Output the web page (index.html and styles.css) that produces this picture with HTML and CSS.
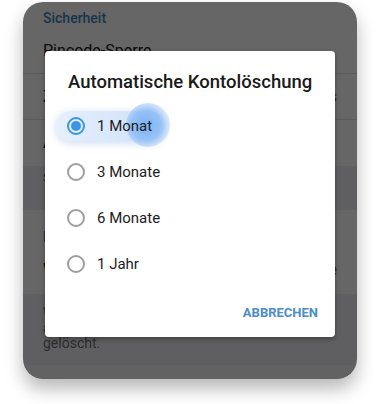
FILE: index.html
```html
<!DOCTYPE html>
<html lang="de">
<head>
<meta charset="utf-8">
<link rel="stylesheet" href="styles.css">
</head>
<body>
<div class="phone">
  <div class="screen">
    <div class="section">
      <div class="header">Sicherheit</div>
      <div class="row">Pincode-Sperre</div>
      <div class="row">Zwei-Schritt-Bestätigung <span class="val">Aus</span></div>
      <div class="row last">Aktive Sitzungen</div>
    </div>
    <div class="gap">Steuere deine Sitzungen auf anderen Geräten.</div>
    <div class="section">
      <div class="header second">Konto automatisch löschen</div>
      <div class="row last tall">Wenn abwesend seit <span class="val">6 Monate</span></div>
    </div>
    <div class="footer">Wenn du dich in diesem Zeitraum nicht einmal<br>anmeldest, wird dein Konto mit allen Chats<br>gelöscht.</div>
    <div class="bottom"></div>
  </div>
  <div class="overlay"></div>
  <div class="dialog">
    <div class="title">Automatische Kontolöschung</div>
    <div class="options">
      <div class="opt selected">
        <span class="ripple-pill"></span>
        <span class="ripple-dot"></span>
        <span class="radio"></span><span class="label">1 Monat</span>
      </div>
      <div class="opt"><span class="radio"></span><span class="label">3 Monate</span></div>
      <div class="opt"><span class="radio"></span><span class="label">6 Monate</span></div>
      <div class="opt"><span class="radio"></span><span class="label">1 Jahr</span></div>
    </div>
    <div class="actions"><span class="btn">ABBRECHEN</span></div>
  </div>
</div>
</body>
</html>
```

FILE: styles.css
```css
html, body {
  margin: 0;
  padding: 0;
  background: #ffffff;
  width: 381px;
  height: 404px;
  overflow: hidden;
  font-family: Roboto, "Noto Sans", "Liberation Sans", sans-serif;
}
.phone {
  position: relative;
  margin: 2px 0 0 23px;
  width: 334px;
  height: 377px;
  border-radius: 20px;
  overflow: hidden;
  box-shadow: 0 10px 18px rgba(0,0,0,0.28);
}
.screen {
  background: #ffffff;
  height: 100%;
  color: #222;
}
.section {
  background: #ffffff;
}
.header {
  color: #3e83bc;
  font-size: 14px;
  font-weight: 500;
  line-height: 18px;
  padding: 7px 20px 0;
  height: 19px;
  white-space: nowrap;
}
.header.second {
  padding-top: 18px;
  height: 18px;
}
.row {
  display: flex;
  justify-content: space-between;
  font-size: 16px;
  height: 45px;
  line-height: 45px;
  padding: 0 20px;
  border-bottom: 1px solid #e4e4e4;
  white-space: nowrap;
}
.row.last { border-bottom: none; height: 46px; line-height: 46px; }
.row.tall { height: 48px; line-height: 48px; }
.val { color: #666; }
.gap {
  background: #eeeef2;
  height: 44px;
  font-size: 13px;
  color: #6d6d72;
  padding: 4px 20px;
  box-sizing: border-box;
  white-space: nowrap;
  overflow: hidden;
}
.footer {
  background: #eeeef2;
  font-size: 14px;
  color: #6d6d72;
  padding: 12px 20px 0;
  line-height: 15px;
  height: 71px;
  box-sizing: border-box;
  white-space: nowrap;
}
.bottom {
  background: #f4f4f7;
  height: 20px;
}
.overlay {
  position: absolute;
  inset: 0;
  background: rgba(0,0,0,0.6);
}
.dialog {
  position: absolute;
  left: 22px;
  top: 49px;
  width: 290px;
  height: 286px;
  box-sizing: border-box;
  background: #ffffff;
  border-radius: 4px;
  padding: 19px 17px 0 22px;
  box-shadow: 0 2px 5px rgba(0,0,0,0.35);
}
.title {
  font-size: 18.5px;
  font-weight: 500;
  color: #1a1a1a;
  line-height: 24px;
  padding-left: 1px;
  margin-bottom: 9px;
  white-space: nowrap;
}
.options {
  display: flex;
  flex-direction: column;
}
.opt {
  position: relative;
  display: flex;
  align-items: center;
  height: 46px;
  gap: 12px;
}
.radio {
  position: relative;
  width: 18px;
  height: 18px;
  box-sizing: border-box;
  border: 2px solid #9e9e9e;
  border-radius: 50%;
  flex: none;
}
.selected .radio {
  border-color: #3a95e4;
}
.selected .radio::after {
  content: "";
  position: absolute;
  left: 2px;
  top: 2px;
  width: 10px;
  height: 10px;
  border-radius: 50%;
  background: #3a95e4;
}
.label {
  position: relative;
  font-size: 15px;
  color: #1c1c1c;
}
.ripple-pill {
  position: absolute;
  left: -11px;
  top: 8px;
  width: 108px;
  height: 30px;
  border-radius: 15px;
  background: linear-gradient(90deg, rgba(228,238,252,0.9), rgba(200,222,250,0.95));
  box-shadow: 0 2px 9px rgba(120,160,220,0.4);
}
.ripple-dot {
  position: absolute;
  left: 59px;
  top: 0px;
  width: 44px;
  height: 44px;
  border-radius: 50%;
  background: radial-gradient(circle at 45% 50%, rgba(120,176,245,0.95) 0, rgba(140,188,246,0.85) 45%, rgba(190,215,250,0.6) 70%, rgba(220,232,252,0) 100%);
}
.actions {
  display: flex;
  justify-content: flex-end;
  margin-top: 8px;
}
.btn {
  font-size: 13px;
  font-weight: 700;
  color: #4a8ec6;
  line-height: 36px;
}
```
